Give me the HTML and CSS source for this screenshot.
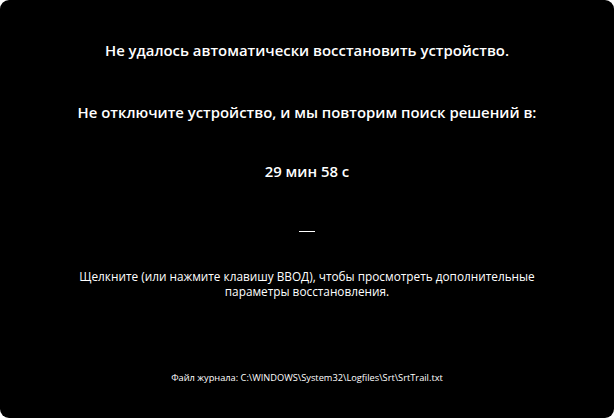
FILE: index.html
```html
<!DOCTYPE html>
<html lang="ru">
<head>
<meta charset="utf-8">
<link rel="stylesheet" href="styles.css">
</head>
<body>
<div class="screen">
  <p class="title">Не удалось автоматически восстановить устройство.</p>
  <p class="subtitle">Не отключите устройство, и мы повторим поиск решений в:</p>
  <p class="timer">29 мин 58 с</p>
  <div class="dash"></div>
  <p class="hint">Щелкните (или нажмите клавишу ВВОД), чтобы просмотреть дополнительные<br>параметры восстановления.</p>
  <p class="log">Файл журнала: C:\WINDOWS\System32\Logfiles\Srt\SrtTrail.txt</p>
</div>
</body>
</html>
```
FILE: styles.css
```css
html, body {
  margin: 0;
  padding: 0;
  background: #ffffff;
}
.screen {
  width: 614px;
  height: 418px;
  box-sizing: border-box;
  background: #000000;
  border-radius: 9px;
  color: #ffffff;
  font-family: "Open Sans", "Noto Sans", sans-serif;
  display: flex;
  flex-direction: column;
  align-items: center;
  text-align: center;
  padding-top: 40px;
}
.screen p { margin: 0; }
.title, .subtitle, .timer {
  font-size: 14.9px;
  font-weight: 600;
  line-height: 20px;
}
.subtitle { margin-top: 42px !important; }
.timer { margin-top: 39px !important; }
.dash {
  width: 16px;
  height: 1px;
  background: #ffffff;
  margin-top: 50px;
}
.hint {
  font-size: 11.8px;
  line-height: 15px;
  margin-top: 37px !important;
}
.log {
  font-size: 9.25px;
  line-height: 14px;
  margin-top: 72px !important;
}
```
